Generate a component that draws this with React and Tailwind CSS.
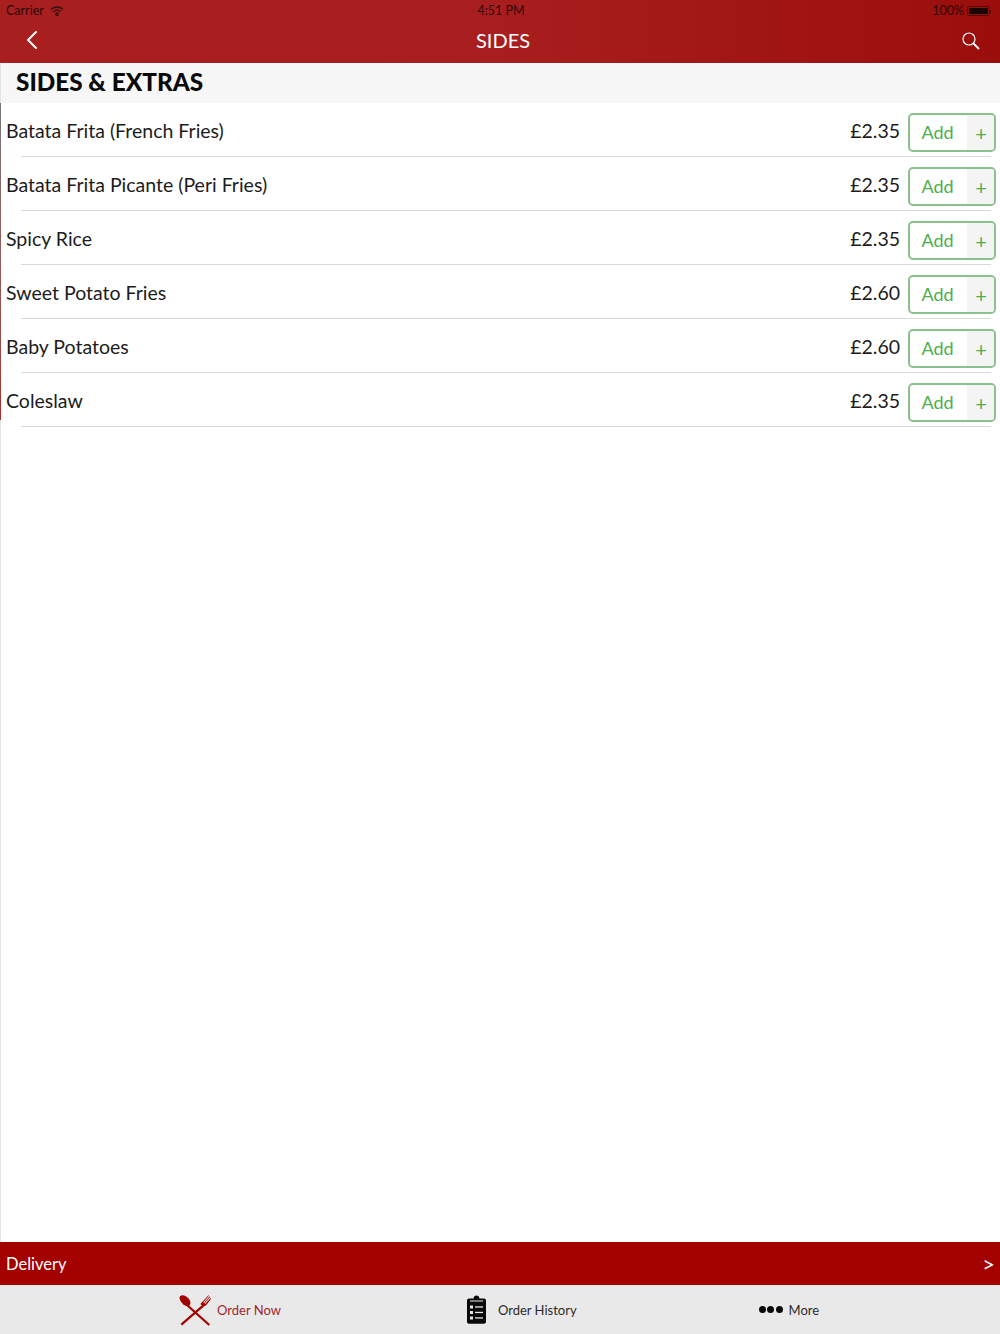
import { ChevronLeft } from 'lucide-react'

const items = [
  { name: 'Batata Frita (French Fries)', price: '£2.35' },
  { name: 'Batata Frita Picante (Peri Fries)', price: '£2.35' },
  { name: 'Spicy Rice', price: '£2.35' },
  { name: 'Sweet Potato Fries', price: '£2.60' },
  { name: 'Baby Potatoes', price: '£2.60' },
  { name: 'Coleslaw', price: '£2.35' },
]

function Wifi() {
  return (
    <svg width="14" height="10" viewBox="0 0 14 10" fill="none" stroke="#3d1010" strokeWidth="1.6">
      <path d="M1 3.4C4.4.4 9.6.4 13 3.4" />
      <path d="M3.2 5.6C5.3 3.8 8.7 3.8 10.8 5.6" />
      <path d="M5.3 7.6C6.3 6.8 7.7 6.8 8.7 7.6" />
      <circle cx="7" cy="9" r=".7" fill="#3d1010" />
    </svg>
  )
}

function Battery() {
  return (
    <div className="flex items-center">
      <div className="w-[23px] h-[10px] border border-[#4a1010] rounded-[2px] p-[1px]">
        <div className="w-full h-full bg-[#1a0505] rounded-[1px]" />
      </div>
      <div className="w-[1px] h-[3px] bg-[#4a1010]" />
    </div>
  )
}

function SearchIcon() {
  return (
    <svg width="18" height="18" viewBox="0 0 18 18" fill="none" stroke="white" className="mt-[2px]">
      <circle cx="7" cy="7" r="6" strokeWidth="1.2" />
      <path d="M11.5 11.500 17 17" strokeWidth="1.800" />
    </svg>
  )
}

function Cutlery() {
  return (
    <svg width="32" height="32" viewBox="0 0 32 32" fill="#a30000">
      <path d="M1 2.2C3.4.2 7.2 1.6 9.6 4.6c2 2.6 2.4 5.4 1 6.8-1.2 1.1-3 1-4.6.2C3.4 10.200 1.200 7.400.600 4.600.400 3.600.500 2.800 1 2.200Z" />
      <path d="M9.300 10.800 31 30.200 29.500 31.800 7.800 12.300Z" />
      <path d="M23.500 10.700 1.600 29.800 3 31.600 25 12.400Z" />
      <path d="M21.800 9.500 29.500 1.300 30 1.800 24.300 8.300 24.900 8.900 30.700 2.600 31.200 3.100 25.500 9.500 26.100 10.100 31.600 4.100 32 4.800 27.800 10.600C26.400 12.300 24.500 12.700 23.200 11.600 21.900 10.800 21.200 10.300 21.800 9.500Z" />
    </svg>
  )
}

function Clipboard() {
  return (
    <svg width="19" height="29" viewBox="0 0 19 29">
      <path d="M2 3.500H6.500C6.700 1.700 7.900.500 9.500.500S12.300 1.700 12.500 3.500H17C18.100 3.500 19 4.400 19 5.500V26.800C19 27.900 18.100 28.800 17 28.800H2C.900 28.800 0 27.900 0 26.800V5.500C0 4.400.900 3.500 2 3.500Z" fill="#0a0a0a" />
      <rect x="3" y="5.500" width="13" height="1" fill="#e9e9e9" />
      <rect x="3" y="10.500" width="3" height="3" fill="#e9e9e9" />
      <rect x="8" y="11.300" width="8" height="1.300" fill="#e9e9e9" />
      <rect x="3" y="16" width="3" height="3" fill="#e9e9e9" />
      <rect x="8" y="16.800" width="8" height="1.300" fill="#e9e9e9" />
      <rect x="3" y="21.500" width="3" height="3" fill="#e9e9e9" />
      <rect x="8" y="22.300" width="8" height="1.300" fill="#e9e9e9" />
    </svg>
  )
}

function Row({ name, price }) {
  return (
    <div className="relative h-[54px] flex items-center pl-[5px] pr-[4px]">
      <span className="flex-1 text-[19.5px] text-[#1c1c1c] mt-[2px]">{name}</span>
      <span className="text-[19.5px] text-[#1c1c1c] mr-2 mt-[2px]">{price}</span>
      <div className="z-10 w-[88px] h-[39px] mt-[5px] flex border-2 border-[#8cc08e] rounded-[5px] overflow-hidden bg-white">
        <span className="w-[57px] pr-[2px] flex items-center justify-center text-[18px] text-[#4caf50]">Add</span>
        <span className="flex-1 flex items-center justify-center bg-[#f4f4f4] text-[20px] pt-[1px] pl-[1px] text-[#4caf50]">+</span>
      </div>
      <div className="absolute left-[20px] right-[9px] bottom-0 h-px bg-[#d9d9d9]" />
    </div>
  )
}

export default function App() {
  return (
    <div className="w-[1000px] h-[1334px] flex flex-col bg-white font-['Lato',sans-serif]">
      <header className="h-[63px] shrink-0 flex flex-col bg-gradient-to-r from-[#a81f1f] via-[#a81e1e] to-[#9a0d0b]">
        <div className="relative h-[20px] flex items-center justify-between pl-[6px] pr-[9px] pt-[2px] text-[12.5px] text-[#2e0a0a]">
          <div className="flex items-center gap-[6px]">
            <span>Carrier</span>
            <Wifi />
          </div>
          <span className="absolute left-0 right-0 text-center pl-[2px]">4:51 PM</span>
          <div className="flex items-center gap-[3px]">
            <span>100%</span>
            <Battery />
          </div>
        </div>
        <div className="flex-1 flex items-center justify-between pl-[16px] pr-[20px] pb-[3px] text-white">
          <ChevronLeft size={32} strokeWidth={1.5} />
          <span className="text-[20px] pr-[4px]">SIDES</span>
          <SearchIcon />
        </div>
      </header>

      <main className="flex-1 flex flex-col border-l border-[#e4e4e4]">
        <div className="h-[40px] shrink-0 flex items-center pl-[15px] pb-[2px] bg-[#f7f7f7]">
          <h1 className="text-[24.3px] font-black text-[#0a0a0a]">SIDES &amp; EXTRAS</h1>
        </div>
        <div className="relative">
          <div className="absolute -left-px top-0 w-px h-[317px] bg-gradient-to-b from-[#777777] to-[#a83030]" />
          {items.map((item) => (
            <Row key={item.name} name={item.name} price={item.price} />
          ))}
        </div>
      </main>

      <div className="h-[43px] shrink-0 flex items-center justify-between pl-[6px] pr-[5px] pt-[1px] bg-[#a30000] text-white text-[16.5px]">
        <span>Delivery</span>
        <span className="text-[22px] pb-[1px]">&gt;</span>
      </div>

      <nav className="h-[49px] shrink-0 flex items-center bg-[#e9e9e9] text-[13px]">
        <div className="ml-[179px] flex items-center gap-[6px] text-[#a3262a]">
          <Cutlery />
          <span className="mt-[2px]">Order Now</span>
        </div>
        <div className="ml-[186px] flex items-center gap-[12px] text-[#2b2b2b]">
          <Clipboard />
          <span className="mt-[2px]">Order History</span>
        </div>
        <div className="ml-[182px] flex items-center gap-[6px] text-[#2b2b2b]">
          <div className="flex gap-[1.5px]">
            <span className="w-[7px] h-[7px] rounded-full bg-[#0a0a0a]" />
            <span className="w-[7px] h-[7px] rounded-full bg-[#0a0a0a]" />
            <span className="w-[7px] h-[7px] rounded-full bg-[#0a0a0a]" />
          </div>
          <span className="mt-[2px]">More</span>
        </div>
      </nav>
    </div>
  )
}
